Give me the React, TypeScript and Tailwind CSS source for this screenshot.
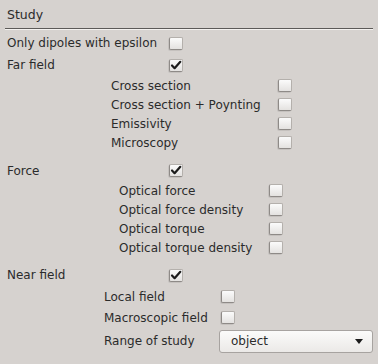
import React from 'react';

const font = { fontFamily: '"DejaVu Sans", "Liberation Sans", sans-serif' };

function CheckBox({ checked = false }: { checked?: boolean }) {
  return (
    <div className="relative w-[14px] h-[13px] rounded-[2px] border border-[#b4b0ac] border-l-[#8e8a87] border-b-[#8e8a87] bg-gradient-to-b from-[#fbfbfb] to-[#e4e2e0] shadow-[-1px_1px_0_rgba(0,0,0,0.08)]">
      {checked && (
        <svg
          viewBox="0 0 14 13"
          className="absolute -left-[1px] -top-[1px] w-[14px] h-[13px]"
        >
          <path
            d="M3 6.5 L5.6 9.2 L11.3 2.8"
            fill="none"
            stroke="#1c1c1c"
            strokeWidth="2.2"
            strokeLinecap="round"
            strokeLinejoin="round"
          />
        </svg>
      )}
    </div>
  );
}

function Row({
  label,
  checked,
  labelW,
  h,
}: {
  label: string;
  checked?: boolean;
  labelW: string;
  h: string;
}) {
  return (
    <div className={`flex items-center ${h}`}>
      <div className={`${labelW} whitespace-nowrap`}>{label}</div>
      <CheckBox checked={checked} />
    </div>
  );
}

export default function App() {
  const farField = ['Cross section', 'Cross section + Poynting', 'Emissivity', 'Microscopy'];
  const force = ['Optical force', 'Optical force density', 'Optical torque', 'Optical torque density'];

  return (
    <div
      className="w-[378px] h-[364px] bg-[#d6d2cf] text-[#2b2b2b] text-[12px] overflow-hidden"
      style={font}
    >
      <div className="h-[28px] pt-[2px] px-[7px] flex items-center text-[12.5px]">Study</div>
      <div className="ml-[5px] mr-[5px] h-[2px] bg-[#5c5a58] border-b border-[#f4f2f0]" />

      <div className="mt-[2px] px-[7px]">
        <Row label="Only dipoles with epsilon" labelW="w-[162px]" h="h-[22px]" />
        <Row label="Far field" checked labelW="w-[162px]" h="h-[22px]" />
      </div>

      <div className="pl-[111px]">
        {farField.map((l) => (
          <Row key={l} label={l} labelW="w-[167px]" h="h-[19px]" />
        ))}
      </div>

      <div className="mt-[8px] px-[7px]">
        <Row label="Force" checked labelW="w-[162px]" h="h-[21px]" />
      </div>
      <div className="pl-[119px]">
        {force.map((l) => (
          <Row key={l} label={l} labelW="w-[150px]" h="h-[19px]" />
        ))}
      </div>

      <div className="mt-[7px] px-[7px]">
        <Row label="Near field" checked labelW="w-[162px]" h="h-[22px]" />
      </div>
      <div className="pl-[104px]">
        <Row label="Local field" labelW="w-[117px]" h="h-[21px]" />
        <Row label="Macroscopic field" labelW="w-[117px]" h="h-[21px]" />
        <div className="flex items-center h-[26px]">
          <div className="w-[115px] whitespace-nowrap">Range of study</div>
          <div className="w-[154px] h-[23px] rounded-[3px] border border-[#a7a3a0] bg-gradient-to-b from-[#fbfbfa] to-[#ebe9e7] flex items-center pl-[11px] pr-[9px] justify-between">
            <span>object</span>
            <svg viewBox="0 0 8 5" className="w-[8px] h-[5px]">
              <path d="M0 0 H8 L4 5 Z" fill="#1c1c1c" />
            </svg>
          </div>
        </div>
      </div>
    </div>
  );
}
